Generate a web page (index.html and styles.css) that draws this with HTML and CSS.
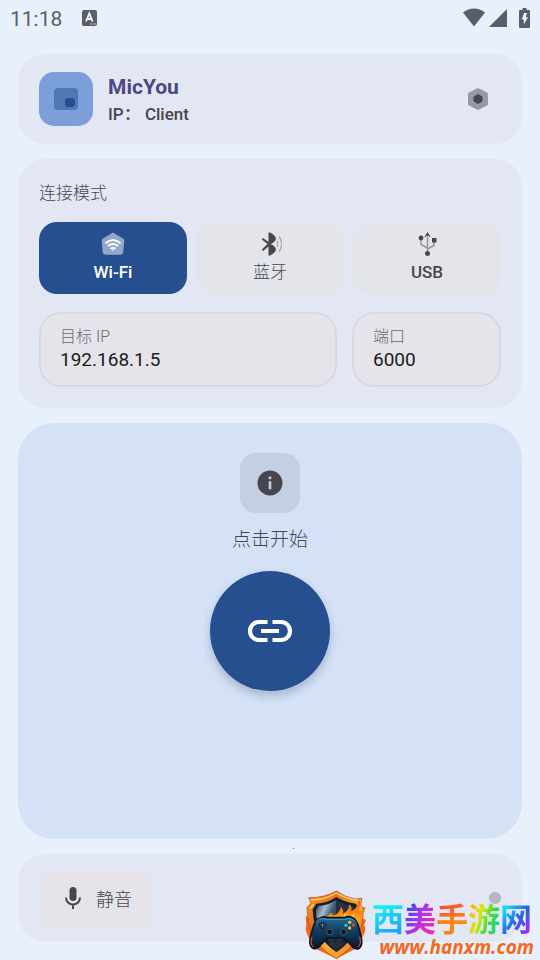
FILE: index.html
```html
<!DOCTYPE html>
<html lang="zh-CN">
<head>
  <meta charset="UTF-8">
  <title>MicYou</title>
  <meta name="viewport" content="width=device-width, initial-scale=1.0">
  <link rel="stylesheet" href="styles.css">
</head>
<body>
  <div class="statusbar">
    <span class="time">11:18</span>
    <svg class="notif" width="16" height="16" viewBox="0 0 16 16">
      <rect width="15" height="16" rx="2" fill="#5b5e66"/>
      <path d="M4 11.5 7.3 3.5 10.6 11.5M5.2 9h4.2" fill="none" stroke="#eef3fb" stroke-width="1.9"/>
      <path d="M8 14h6" stroke="#eef3fb" stroke-width="1.2" stroke-dasharray="1.2 1"/>
    </svg>
    <div class="status-icons">
      <svg width="22" height="20" viewBox="0 0 22 20"><path d="M0 4.6C6.500-.8 15.500-.8 22 4.600L11 18.500Z" fill="#5b5e66"/></svg>
      <svg width="18" height="20" viewBox="0 0 18 20"><path d="M18 1v18H0Z" fill="#5b5e66"/></svg>
      <svg class="battery" width="11" height="20" viewBox="0 0 11 20">
        <path d="M3.500 0h4v2H10q1 0 1 1v16q0 1-1 1H1q-1 0-1-1V3q0-1 1-1h2.500Z" fill="#5b5e66"/>
        <path d="M5 5h3L6.800 9.200H9L4.800 16.500V11.500H2.800Z" fill="#eef3fb"/>
      </svg>
    </div>
  </div>

  <main>
    <!-- Header -->
    <header class="card header">
      <div class="logo">
        <svg width="54" height="54" viewBox="0 0 54 54">
          <rect x="15" y="16" width="24" height="22" rx="4" fill="#5078b6"/>
          <rect x="26" y="26" width="10" height="9" rx="3" fill="#264f90"/>
        </svg>
      </div>
      <div class="who">
        <h1>MicYou</h1>
        <p>IP： Client</p>
      </div>
      <button class="settings" type="button" aria-label="设置">
        <svg width="20" height="24" viewBox="0 0 20 24">
          <path d="M10 1 19 5.500Q20 6 20 7.500V16.500Q20 18 19 18.500L10 23 1 18.500Q0 18 0 16.500V7.500Q0 6 1 5.500Z" fill="#9698a3"/>
          <path d="M10 7.500 14 9.700V14.300L10 16.500 6 14.300V9.700Z" fill="#464650" stroke="#464650"/>
        </svg>
      </button>
    </header>

    <!-- Mode -->
    <section class="card mode">
      <h2>连接模式</h2>
      <div class="tabs">
        <button class="tab active" type="button">
          <svg width="24" height="24" viewBox="0 0 24 24">
            <path d="M12 .5 22 6.500Q23.500 7.500 23.200 9L22.300 20Q22 22.500 19.500 22.800H4.500Q2 22.500 1.700 20L.8 9Q.5 7.500 2 6.500Z" fill="#92a7ca"/>
            <path d="M4.500 11.200Q12 4.700 19.500 11.200M7 14Q12 9.800 17 14M9.500 16.800Q12 14.900 14.500 16.800" fill="none" stroke="#fff" stroke-width="1.900"/>
            <path d="M10.500 17.500h3L12 19Z" fill="#fff"/>
          </svg>
          Wi-Fi
        </button>
        <button class="tab cn" type="button">
          <svg width="24" height="24" viewBox="0 0 24 24">
            <path d="M10.500.5h1.500Q17 3 18 6.500 17.500 10 12.500 12 17.500 14 18 17.500 17 21 12 23.500h-1.500V14.500L5 19 3.800 17.500 9.500 12 3.800 7.500 5 6l5.500 4Z" fill="#46464e"/>
            <path d="M19.500 9v6M21 4.500q5.500 7.500 0 15" fill="none" stroke="#a9a8b2" stroke-width="1.500"/>
          </svg>
          蓝牙
        </button>
        <button class="tab" type="button">
          <svg width="24" height="24" viewBox="0 0 24 24">
            <path d="M12.500 3v18M6 6v6.500l6.500 3.500M19 8v5.500L12.500 17" fill="none" stroke="#96959e" stroke-width="1.500"/>
            <path d="M9 5.500 12.500 0 16 5.500 12.500 3.300Z" fill="#46464e"/>
            <circle cx="6" cy="6" r="2.400" fill="#46464e"/>
            <circle cx="12.500" cy="21.500" r="2.500" fill="#46464e"/>
            <rect x="17" y="6" width="4.500" height="4.500" fill="#46464e"/>
          </svg>
          USB
        </button>
      </div>
      <div class="fields">
        <div class="field">
          <label for="ip">目标 IP</label>
          <input id="ip" type="text" value="192.168.1.5">
        </div>
        <div class="field">
          <label for="port">端口</label>
          <input id="port" type="text" value="6000">
        </div>
      </div>
    </section>

    <!-- Connect -->
    <section class="connect">
      <div class="info">
        <svg width="26" height="26" viewBox="0 0 26 26">
          <circle cx="13" cy="13" r="12.500" fill="#47464f"/>
          <circle cx="13" cy="7.700" r="1.500" fill="#c3cfe3"/>
          <rect x="11.700" y="11" width="2.600" height="8.500" rx="1.200" fill="#c3cfe3"/>
        </svg>
      </div>
      <p>点击开始</p>
      <button class="start" type="button" aria-label="点击开始">
        <svg width="46" height="24" viewBox="0 0 46 24" fill="none" stroke="#fff" stroke-width="4.200">
          <path d="M20.500 3H12a9 9 0 0 0 0 18h8.500M25.500 3H34a9 9 0 0 1 0 18h-8.500M14 12h18"/>
        </svg>
      </button>
    </section>

    <!-- Bottom bar -->
    <footer class="card bottom">
      <button class="mute" type="button">
        <svg width="16" height="22" viewBox="0 0 16 22">
          <rect x="4.500" y="0" width="7" height="14" rx="3.500" fill="#46464e"/>
          <path d="M1 10.500a7 7 0 0 0 14 0M8 17.500V22" fill="none" stroke="#46464e" stroke-width="2"/>
        </svg>
        静音
      </button>
      <span class="dot"></span>
    </footer>
  </main>

  <div class="speck"></div>

  <div class="watermark">
    <svg width="75" height="80" viewBox="0 0 225 240">
      <defs>
        <linearGradient id="rim" x1="0" y1="0" x2="1" y2="1">
          <stop offset="0" stop-color="#f5a02c"/>
          <stop offset=".3" stop-color="#e8701d"/>
          <stop offset=".6" stop-color="#ffb43a"/>
          <stop offset="1" stop-color="#d9540f"/>
        </linearGradient>
        <linearGradient id="steel" x1="0" y1="0" x2="1" y2="1">
          <stop offset="0" stop-color="#27384d"/>
          <stop offset=".3" stop-color="#a9bccb"/>
          <stop offset=".5" stop-color="#435b74"/>
          <stop offset="1" stop-color="#101925"/>
        </linearGradient>
        <linearGradient id="fire" x1="0" y1="0" x2="0" y2="1">
          <stop offset="0" stop-color="#f1520e"/>
          <stop offset=".6" stop-color="#ff9716"/>
          <stop offset="1" stop-color="#ffe05a"/>
        </linearGradient>
        <linearGradient id="pad" x1="0" y1="0" x2="0" y2="1">
          <stop offset="0" stop-color="#247197"/>
          <stop offset=".4" stop-color="#143f63"/>
          <stop offset="1" stop-color="#0a1628"/>
        </linearGradient>
      </defs>
      <path d="M28 136Q22 150 36 174L56 206 118 236 176 206 200 164Q209 149 201 135L207 120 190 112 205 82H36L42 118 26 108Z" fill="#ef681a"/>
      <path d="M118 33Q142 51 175 57L195 55 191 75 200 88Q195 145 181 176 160 212 118 236 76 212 54 176 31 143 30 82L42 70 35 53Q82 54 118 33Z" fill="url(#rim)" stroke="#b5430f" stroke-width="2"/>
      <path d="M118 39Q144 56 186 62M42 60Q87 59 118 39M38 86 50 73" fill="none" stroke="#ffd56a" stroke-width="4"/>
      <path d="M118 51Q143 67 177 71L184 87Q181 142 163 173 145 199 118 216 91 198 73 173 48 137 47 88L58 71Q92 69 118 51Z" fill="#15202f"/>
      <path d="M118 60Q94 76 65 78L57 91Q57 132 80 165L118 203Z" fill="url(#steel)"/>
      <path d="M118 60Q143 75 169 79L176 91Q174 145 118 203Z" fill="#25313f"/>
      <path d="M88 118Q95 99 107 98L105 106Q128 104 132 80 142 92 137 101 154 96 157 73 167 82 162 92 179 91 187 56 192 75 184 93 196 94 206 80 203 101 185 123L178 145H82Z" fill="url(#fire)"/>
      <path d="M118 118Q140 113 144 100 151 108 146 113 166 111 174 98 172 114 163 125Z" fill="#ffd13c"/>
      <path d="M68 115Q79 107 91 113H141Q157 106 168 114 181 119 188 153 198 185 192 198 184 213 168 202L149 181Q144 174 133 174H99Q88 174 82 183L64 202Q48 212 41 198 34 183 47 146 54 119 68 115Z" fill="url(#pad)" stroke="#071424" stroke-width="5"/>
      <path d="M56 126Q68 111 88 118H145Q165 111 178 128" fill="none" stroke="#3fa0bd" stroke-width="3"/>
      <path d="M45 170Q38 192 49 201M188 170Q194 193 183 202" fill="none" stroke="#ed6423" stroke-width="3"/>
      <path d="M77 125v21M66 135h22" stroke="#07101e" stroke-width="9"/>
      <path d="M77 127v17M68 135h18" stroke="#68869a" stroke-width="3"/>
      <g fill="#0a1422" stroke="#37627e" stroke-width="3">
        <circle cx="98" cy="156" r="9"/>
        <circle cx="140" cy="156" r="9"/>
      </g>
      <circle cx="158" cy="127" r="5" fill="#f0c340"/>
      <circle cx="169" cy="135" r="5" fill="#e54536"/>
      <circle cx="147" cy="136" r="5" fill="#43b5e0"/>
      <circle cx="158" cy="144" r="5" fill="#efbd35"/>
      <path d="M76 197Q99 204 118 222 139 205 160 197L118 234Z" fill="#f8a132"/>
      <path d="M92 188 118 211 144 188Z" fill="#27313b"/>
    </svg>
    <div class="site">
      <div class="site-name"><span class="c1">西</span><span class="c2">美</span><span class="c3">手</span><span class="c4">游</span><span class="c5">网</span></div>
      <a href="http://www.hanxm.com">www.hanxm.com</a>
    </div>
  </div>
</body>
</html>
```

FILE: styles.css
```css
* {
  box-sizing: border-box;
}

body {
  margin: 0;
  min-height: 100vh;
  position: relative;
  display: flex;
  flex-direction: column;
  background: #e8f0fc;
  color: #46464f;
  font-family: Roboto, "Noto Sans CJK SC", sans-serif;
}

h1, h2, p {
  margin: 0;
}

button {
  border: 0;
  padding: 0;
  font-family: inherit;
  color: inherit;
}

svg {
  display: block;
}

.statusbar {
  display: flex;
  align-items: center;
  height: 36px;
  padding: 0 10px;
}

.time {
  font-size: 21px;
  line-height: 30px;
  padding-top: 2px;
  color: #5b5e66;
}

.notif {
  margin-left: 20px;
}

.status-icons {
  display: flex;
  gap: 4px;
  margin-left: auto;
}

.battery {
  margin-left: 8px;
}

main {
  flex: 1;
  display: flex;
  flex-direction: column;
  gap: 15px;
  padding: 18px;
}

.card {
  background: #e3e7f3;
  border-radius: 27px;
  padding: 0 21px;
}

.header {
  display: flex;
  align-items: center;
  gap: 15px;
  padding: 18px 21px;
}

.logo {
  background: #7c9fda;
  border-radius: 15px;
}

.who {
  flex: 1;
}

.who h1 {
  font-size: 21px;
  line-height: 30px;
  font-weight: 700;
  color: #4d4785;
}

.who p {
  font-size: 17px;
  line-height: 24px;
  font-weight: 500;
}

.settings {
  display: flex;
  justify-content: center;
  width: 46px;
  background: none;
}

.mode {
  padding: 21px;
}

.mode h2 {
  font-size: 17px;
  line-height: 27px;
  font-weight: 300;
  margin-bottom: 15px;
}

.tabs {
  display: flex;
  gap: 9px;
  margin-bottom: 18px;
}

.tab {
  flex: 1;
  display: flex;
  flex-direction: column;
  align-items: center;
  gap: 3px;
  padding: 10px 0 8px;
  border-radius: 18px;
  background: #e4e4eb;
  font-size: 17px;
  line-height: 27px;
  font-weight: 500;
}

.tab.cn {
  font-weight: 300;
}

.tab.active {
  background: #264f90;
  color: #fff;
}

.fields {
  display: grid;
  grid-template-columns: 2fr 1fr;
  gap: 15px;
}

.field {
  min-width: 0;
  padding: 12px 19px 14px;
  border: 2px solid #d7d8e3;
  border-radius: 22px;
  background: #e4e4ea;
}

.field label {
  display: block;
  font-size: 16px;
  line-height: 22px;
  font-weight: 300;
  color: #6b6a74;
}

.field input {
  display: block;
  width: 100%;
  height: 23px;
  padding: 0;
  border: 0;
  background: none;
  font-family: inherit;
  font-size: 19px;
  color: #1b1b21;
}

.connect {
  flex: 1;
  display: flex;
  flex-direction: column;
  align-items: center;
  padding: 30px;
  background: #d4e1f6;
  border-radius: 36px;
}

.info {
  display: grid;
  place-items: center;
  width: 60px;
  height: 60px;
  border-radius: 16px;
  background: #c3cfe3;
}

.connect p {
  margin: 13px 0 18px;
  font-size: 19px;
  line-height: 27px;
  font-weight: 300;
}

.start {
  display: grid;
  place-items: center;
  width: 120px;
  height: 120px;
  border-radius: 50%;
  background: #264f90;
  box-shadow: 0 5px 9px rgba(40, 60, 100, 0.25);
}

.bottom {
  display: flex;
  align-items: center;
  justify-content: space-between;
  padding: 16px 21px;
}

.mute {
  display: flex;
  align-items: center;
  gap: 15px;
  height: 56px;
  padding: 0 21px 0 26px;
  border-radius: 12px;
  background: #e4e4ea;
  font-size: 18px;
  font-weight: 300;
}

.dot {
  width: 12px;
  height: 12px;
  border-radius: 50%;
  background: #b5b6c2;
}

.speck {
  position: absolute;
  left: 293px;
  bottom: 111px;
  width: 1px;
  height: 1px;
  background: #2a8fa0;
}

/* watermark over the bottom right corner */
.watermark {
  position: absolute;
  right: 6px;
  bottom: 0;
  display: flex;
  align-items: flex-end;
}

.site {
  text-align: right;
}

.site-name {
  padding-right: 2px;
  font-family: "Noto Sans CJK SC", sans-serif;
  font-size: 32px;
  line-height: 34px;
  font-weight: 700;
}

.site-name span {
  color: transparent;
  background-clip: text;
  -webkit-background-clip: text;
}

.site-name .c1 {
  background-image: linear-gradient(160deg, #10f0f5 30%, #1fa4fa 80%);
}

.site-name .c2 {
  background-image: linear-gradient(120deg, #3a46f0 20%, #a434f0 45%, #f02ab0 80%);
}

.site-name .c3 {
  background-image: linear-gradient(160deg, #f5433c 20%, #ff8a10 60%, #ff6a10);
}

.site-name .c4 {
  background-image: linear-gradient(110deg, #ffb60a 20%, #d6e810 40%, #3ade3a 65%, #16c8c0);
}

.site-name .c5 {
  background-image: linear-gradient(130deg, #14d8f5 25%, #2563f0 55%, #a22cf0 85%);
}

.site a {
  display: block;
  font-family: "Open Sans", sans-serif;
  font-size: 19px;
  line-height: 26px;
  font-weight: 700;
  font-style: italic;
  color: #f4691e;
  text-decoration: none;
}
```
